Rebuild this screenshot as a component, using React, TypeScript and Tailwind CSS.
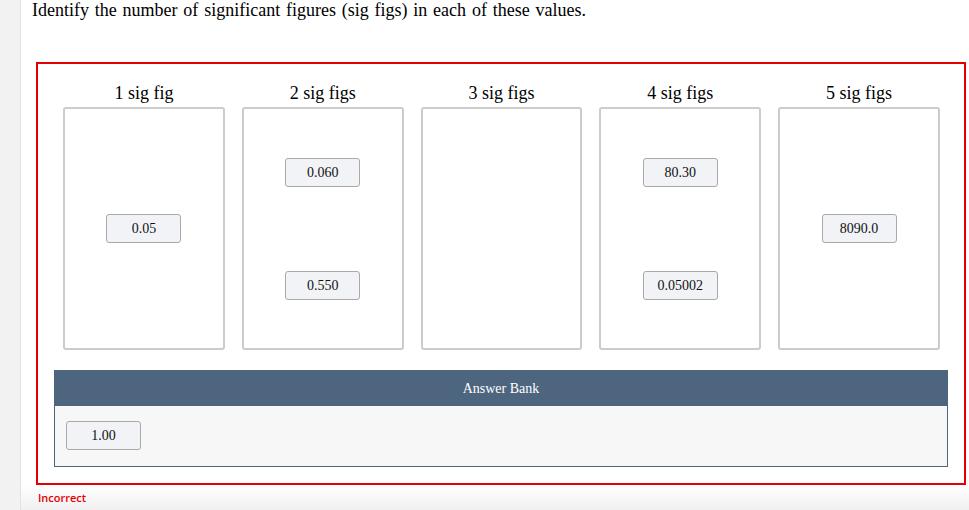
import * as React from 'react';

const columns: { label: string; items: string[] }[] = [
  { label: '1 sig fig', items: ['0.05'] },
  { label: '2 sig figs', items: ['0.060', '0.550'] },
  { label: '3 sig figs', items: [] },
  { label: '4 sig figs', items: ['80.30', '0.05002'] },
  { label: '5 sig figs', items: ['8090.0'] },
];

function Chip({ value }: { value: string }) {
  return (
    <div className="flex h-[29px] w-[75px] items-center justify-center rounded-[3px] border border-[#a9a9a9] bg-[#f2f3f7] text-[14px] text-[#111]">
      {value}
    </div>
  );
}

export default function App() {
  return (
    <div className="flex min-h-[510px] bg-white font-['Liberation_Serif',serif] text-black">
      <div className="w-[21px] shrink-0 border-r border-[#e2e2e2] bg-[#f2f2f2]" />

      <div className="flex flex-1 flex-col">
        <div className="px-[11px] pt-[1px] text-[18px] leading-[19px] [word-spacing:1.3px]">
          Identify the number of significant figures (sig figs) in each of these values.
        </div>

        <div className="ml-[15px] mr-[3px] mt-[42px] border-2 border-[#e30000] pb-[16px] pt-[19px]">
          <div className="grid grid-cols-5 gap-x-[17px] pl-[25px] pr-[24px]">
            {columns.map((col) => (
              <div key={col.label} className="flex flex-col">
                <div className="h-[24px] text-center text-[18px] leading-[21px]">{col.label}</div>
                <div className="flex h-[243px] flex-col items-center justify-center gap-[84px] rounded-[3px] border-2 border-[#cccccc] bg-white">
                  {col.items.map((v) => (
                    <Chip key={v} value={v} />
                  ))}
                </div>
              </div>
            ))}
          </div>

          <div className="mx-[16px] mt-[20px]">
            <div className="flex h-[36px] items-center justify-center bg-[#4e6580] pt-[1px] text-[14px] text-white">
              Answer Bank
            </div>
            <div className="border border-t-0 border-[#4e6580] bg-[#f7f7f7] pb-[16px] pl-[11px] pt-[15px]">
              <Chip value="1.00" />
            </div>
          </div>
        </div>

        <div className="flex-1 bg-gradient-to-b from-white to-[#f0f0f0] pl-[17px] pt-[5px] font-['Open_Sans',sans-serif] text-[11px] font-semibold text-[#e30000]">
          Incorrect
        </div>
      </div>
    </div>
  );
}
